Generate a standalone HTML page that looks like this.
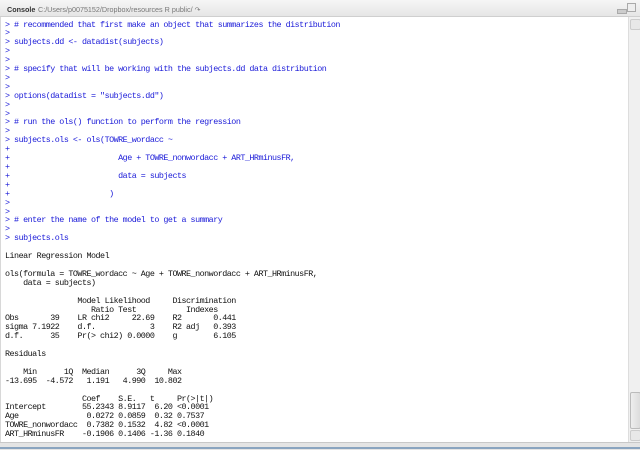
<!DOCTYPE html>
<html><head><meta charset="utf-8"><style>
html,body{margin:0;padding:0;width:640px;height:449px;overflow:hidden;background:#fff;font-family:"Liberation Sans",sans-serif;}
#hdr{position:absolute;left:0;top:0;width:640px;height:16px;background:linear-gradient(#f6f6f6,#e6e6e6);border-bottom:1px solid #cfcfcf;}
#hdr .t{position:absolute;left:7px;top:5px;font-size:7.2px;font-weight:bold;color:#333;}
#hdr .p{position:absolute;left:38px;top:5px;font-size:7.2px;color:#777;}
#con{position:absolute;left:0;top:17px;width:627px;height:425px;background:#fff;border-left:1px solid #d8d8d8;}
pre{position:absolute;left:4px;top:3.5px;margin:0;font-family:"Liberation Mono",monospace;font-size:8.4px;letter-spacing:-0.5px;line-height:8.9px;color:#111;}
.i{color:#1a1ad8;}
#sb{position:absolute;left:628px;top:17px;width:12px;height:425px;background:#f0f0f0;border-left:1px solid #ddd;}
.ar{position:absolute;left:1px;width:9px;height:9px;background:#e8e8e8;border:1px solid #ccc;border-radius:2px;}
#thumb{position:absolute;left:1px;top:375px;width:9px;height:35px;background:linear-gradient(90deg,#eee,#dcdcdc);border:1px solid #bbb;border-radius:2px;}
#bot{position:absolute;left:0;top:442px;width:640px;height:7px;background:#e4e4e4;border-top:1px solid #c8c8c8;}
#bot2{position:absolute;left:0;top:447px;width:640px;height:2px;background:#8aa4bf;}
</style></head><body>
<div id="hdr"><span class="t">Console</span><span class="p">C:/Users/p0075152/Dropbox/resources R public/ &#x21B7;</span>
<div style="position:absolute;left:617px;top:9px;width:8px;height:3px;background:#ccc;border:1px solid #aaa"></div>
<div style="position:absolute;left:627px;top:3px;width:7px;height:7px;border:1px solid #aaa;background:#eee"></div></div>
<div id="con"><pre><span class="i">&gt; # recommended that first make an object that summarizes the distribution
&gt;
&gt; subjects.dd &lt;- datadist(subjects)
&gt;
&gt;
&gt; # specify that will be working with the subjects.dd data distribution
&gt;
&gt;
&gt; options(datadist = "subjects.dd")
&gt;
&gt;
&gt; # run the ols() function to perform the regression
&gt;
&gt; subjects.ols &lt;- ols(TOWRE_wordacc ~
+
+                        Age + TOWRE_nonwordacc + ART_HRminusFR,
+
+                        data = subjects
+
+                      )
&gt;
&gt;
&gt; # enter the name of the model to get a summary
&gt;
&gt; subjects.ols</span>

Linear Regression Model

ols(formula = TOWRE_wordacc ~ Age + TOWRE_nonwordacc + ART_HRminusFR,
    data = subjects)

                Model Likelihood     Discrimination
                   Ratio Test           Indexes
Obs       39    LR chi2     22.69    R2       0.441
sigma 7.1922    d.f.            3    R2 adj   0.393
d.f.      35    Pr(&gt; chi2) 0.0000    g        6.105

Residuals

    Min      1Q  Median      3Q     Max
-13.695  -4.572   1.191   4.990  10.802

                 Coef    S.E.   t     Pr(&gt;|t|)
Intercept        55.2343 8.9117  6.20 &lt;0.0001
Age               0.0272 0.0859  0.32 0.7537
TOWRE_nonwordacc  0.7382 0.1532  4.82 &lt;0.0001
ART_HRminusFR    -0.1906 0.1406 -1.36 0.1840</pre></div>
<div id="sb"><div class="ar" style="top:2px"></div><div id="thumb"></div><div class="ar" style="top:413px"></div></div>
<div id="bot"></div><div id="bot2"></div>
</body></html>
